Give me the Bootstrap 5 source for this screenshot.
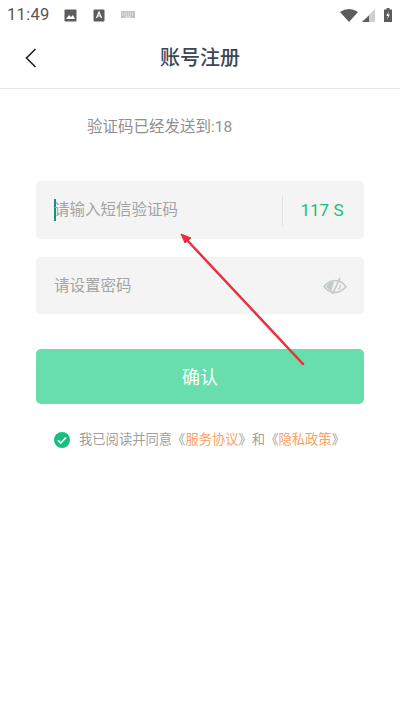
<!DOCTYPE html>
<html lang="zh-CN">
<head>
  <meta charset="UTF-8">
  <meta name="viewport" content="width=device-width, initial-scale=1.0">
  <title>账号注册</title>
  <link href="https://cdn.jsdelivr.net/npm/bootstrap@5.3.0/dist/css/bootstrap.min.css" rel="stylesheet">
  <style>
    body {
      font-family: Roboto, "Noto Sans CJK SC", sans-serif;
      background: #fff;
      width: 400px;
      height: 711px;
      overflow: hidden;
      position: relative;
    }
    .status-bar { height: 32px; padding: 0 8px 2px 7px; color: #555; }
    .status-time { font-size: 16.5px; letter-spacing: .3px; width: 53px; }
    .top-bar { height: 57px; border-bottom: 1px solid #e8e8e8; position: relative; }
    .top-title { font-size: 20px; font-weight: 500; color: #3c4658; line-height: 1; margin-bottom: 5px; }
    .back-icon { position: absolute; left: 25px; top: 16px; }
    .sent-text { font-size: 15.5px; color: #8f8f8f; padding: 28px 0 0 87px; line-height: 20px; height: 92px; }
    .form-area { padding: 0 36px; }
    .input-box { background: #f4f4f4; border-radius: 5px; padding-left: 18px; color: #a3a3a3; font-size: 15.5px; }
    .input-label { padding-top: 2px; }
    .code-box { height: 58px; margin-bottom: 18px; }
    .pwd-box { height: 57px; margin-bottom: 35px; padding-right: 17px; }
    .caret-line { width: 2px; height: 22px; background: #13937a; margin-right: -2px; flex: none; }
    .count-wrap { width: 82px; height: 31px; border-left: 1px solid #e2e2e2; color: #14c07f; font-size: 17px; padding: 2px 3px 0 0; }
    .confirm-btn {
      height: 55px;
      width: 100%;
      background: #68dead;
      border: 0;
      border-radius: 5px;
      color: #fff;
      font-size: 18px;
      padding: 2px 0 0;
    }
    .agree-row { margin-top: 26px; padding-left: 54px; font-size: 13.3px; color: #a0a0a0; line-height: 20px; gap: 9px; }
    .agree-link { color: #f9a263; }
    .note-arrow { position: absolute; left: 0; top: 0; pointer-events: none; }
  </style>
</head>
<body>

  <div class="status-bar d-flex align-items-center">
    <span class="status-time">11:49</span>
    <svg width="13" height="13" viewBox="0 0 13 13" class="ms-1"><rect x="0.5" y="0.5" width="12" height="12" rx="1" fill="#5c5c5c"/><path d="M2 10l3-4 2 2 2-2 2 4z" fill="#fff"/></svg>
    <svg width="12" height="13" viewBox="0 0 12 13" class="ms-3"><rect width="11" height="12" y="0.5" x="0.5" rx="1" fill="#5c5c5c"/><path d="M3.500 9L6 3l2.500 6M4.500 7h3" fill="none" stroke="#fff" stroke-width="1.200"/></svg>
    <svg width="14" height="8" viewBox="0 0 14 8" class="ms-3"><rect width="14" height="7" fill="#c4c4c4"/><path d="M1 2h12M1 4h12" stroke="#eee" stroke-dasharray="1 1"/><rect x="4" y="5.500" width="6" height="1" fill="#eee"/></svg>
    <span class="flex-grow-1"></span>
    <svg width="18" height="13" viewBox="0 0 18 13"><path d="M0 3Q9-3 18 3L9 13z" fill="#5c5c5c"/></svg>
    <svg width="13" height="13" viewBox="0 0 13 13" class="ms-1"><path d="M13 0V13H0z" fill="#cfcfcf"/><path d="M7 6.500V13H0z" fill="#5c5c5c"/></svg>
    <svg width="8" height="14" viewBox="0 0 8 14" class="battery-icon" style="margin-left:9px"><path d="M2.500 0h3v1.500H8V14H0V1.500h2.500z" fill="#5c5c5c"/><path d="M4.800 3L2.300 8h1.700L3.200 11.500 5.800 6.500H4z" fill="#fff"/></svg>
  </div>

  <div class="top-bar d-flex align-items-center justify-content-center">
    <svg class="back-icon" width="12" height="20" viewBox="0 0 12 20"><path d="M10.500 1L1.500 10l9 9" fill="none" stroke="#222" stroke-width="1.600"/></svg>
    <span class="top-title">账号注册</span>
  </div>

  <div class="sent-text">验证码已经发送到:18</div>

  <div class="form-area">
    <div class="input-box code-box d-flex align-items-center">
      <span class="caret-line"></span>
      <span class="input-label flex-grow-1">请输入短信验证码</span>
      <span class="count-wrap d-flex align-items-center justify-content-center">117 S</span>
    </div>
    <div class="input-box pwd-box d-flex align-items-center justify-content-between">
      <span class="input-label">请设置密码</span>
      <svg width="24" height="18" viewBox="0 0 24 18"><path d="M1 9.500Q6 3.500 12 3.500T23 9.500Q18 15.500 12 15.500T1 9.500z" fill="none" stroke="#c3c8c8" stroke-width="1.500"/><path d="M3 9.500Q6 5 11 4.500L10 8 8.500 14Q5 12.500 3 9.500z" fill="#c3c8c8"/><path d="M17 1L9.500 17" stroke="#c3c8c8" stroke-width="1.700"/><path d="M17 8q1 3-2 4.500" fill="none" stroke="#c3c8c8" stroke-width="1.300"/></svg>
    </div>
    <button class="confirm-btn" type="button">确认</button>
  </div>

  <div class="agree-row d-flex align-items-center">
    <svg width="16" height="16" viewBox="0 0 16 16" class="flex-shrink-0"><circle cx="8" cy="8" r="8" fill="#14c07f"/><path d="M4 8.300l2.800 2.700L12 5.500" fill="none" stroke="#fff" stroke-width="1.800"/></svg>
    <span class="text-nowrap">我已阅读并同意《<span class="agree-link">服务协议</span>》和《<span class="agree-link">隐私政策</span>》</span>
  </div>

  <svg class="note-arrow" width="400" height="711" viewBox="0 0 400 711">
    <path d="M303 364L186 239" stroke="#e5323b" stroke-width="2.500" stroke-linecap="round"/>
    <path d="M181 234L191 238 185 243z" fill="#e5323b" stroke="#e5323b" stroke-width="1"/>
  </svg>

  <script src="https://cdn.jsdelivr.net/npm/bootstrap@5.3.0/dist/js/bootstrap.bundle.min.js"></script>
</body>
</html>
